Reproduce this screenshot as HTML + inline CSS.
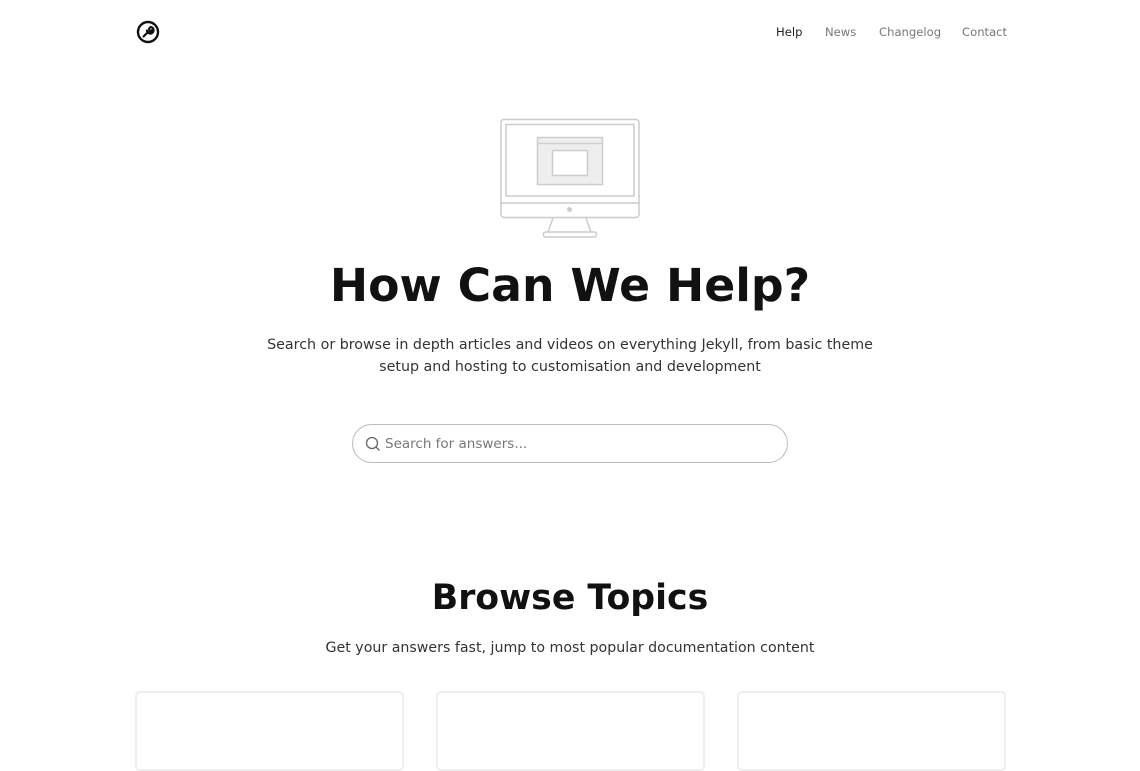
<!DOCTYPE html>
<html><head><meta charset="utf-8"><style>
*{margin:0;padding:0;box-sizing:border-box}
body{width:1140px;height:713px;overflow:hidden;background:#fff;font-family:"DejaVu Sans","Liberation Sans",sans-serif;color:#222;position:relative}
.nav a{position:absolute;top:25px;font-size:11.6px;color:#777;text-decoration:none}
h1{position:absolute;left:0;width:1140px;text-align:center;font-weight:bold;color:#111}
p{position:absolute;left:0;width:1140px;text-align:center;color:#333}
.search{position:absolute;left:352px;top:424px;width:436px;height:39px;border:1px solid #bbb;border-radius:20px}
.search span{position:absolute;left:32px;top:11px;font-size:13.5px;color:#777}
.card{position:absolute;top:691px;width:269px;height:80px;border:2px solid #eee;border-radius:5px}
</style></head><body>
<svg style="position:absolute;left:136px;top:20px" width="24" height="24" viewBox="0 0 24 24"><circle cx="12" cy="12" r="10" fill="none" stroke="#111" stroke-width="2.4"/><path d="M7.5 16.5 L12 12 M11 10.5 a3.3 3.3 0 1 0 3.5-3.5 l-1.5 2 l0.5 1.5 l1.5 0.5 l2-1.5 a3.3 3.3 0 0 1 -4.5 3" fill="none" stroke="#111" stroke-width="2.2" stroke-linecap="round"/></svg>
<div class="nav"><a style="left:776px;color:#222">Help</a><a style="left:825px">News</a><a style="left:879px">Changelog</a><a style="left:962px">Contact</a></div>
<svg style="position:absolute;left:490px;top:110px" width="160" height="135" viewBox="490 110 160 135" fill="none" stroke="#ccc" stroke-width="1.5">
<rect x="501" y="119.5" width="138" height="98" rx="3"/>
<rect x="506" y="124.5" width="128" height="71.5"/>
<line x1="501" y1="203" x2="639" y2="203"/>
<circle cx="569.5" cy="209.5" r="2.5" fill="#ccc" stroke="none"/>
<rect x="537.5" y="137.5" width="65" height="47" fill="#eee"/>
<line x1="537.5" y1="143.5" x2="602.5" y2="143.5"/>
<rect x="552.5" y="150.5" width="35" height="25" fill="#fff"/>
<path d="M553 218 L548 232 M586 218 L591 232"/>
<rect x="543.5" y="232" width="53" height="5" rx="2"/>
</svg>
<h1 style="top:259px;font-size:45.7px">How Can We Help?</h1>
<p style="top:334px;font-size:14.25px;line-height:22px">Search or browse in depth articles and videos on everything Jekyll, from basic theme<br>setup and hosting to customisation and development</p>
<div class="search"><svg style="position:absolute;left:12px;top:11px" width="16" height="16" viewBox="0 0 16 16" fill="none" stroke="#666" stroke-width="1.3"><circle cx="7" cy="7" r="5.5"/><line x1="11" y1="11" x2="14.5" y2="14.5"/></svg><span>Search for answers...</span></div>
<h1 style="top:578px;font-size:34.7px">Browse Topics</h1>
<p style="top:640px;font-size:14.2px">Get your answers fast, jump to most popular documentation content</p>
<div class="card" style="left:135px"></div><div class="card" style="left:436px"></div><div class="card" style="left:737px"></div>
</body></html>
